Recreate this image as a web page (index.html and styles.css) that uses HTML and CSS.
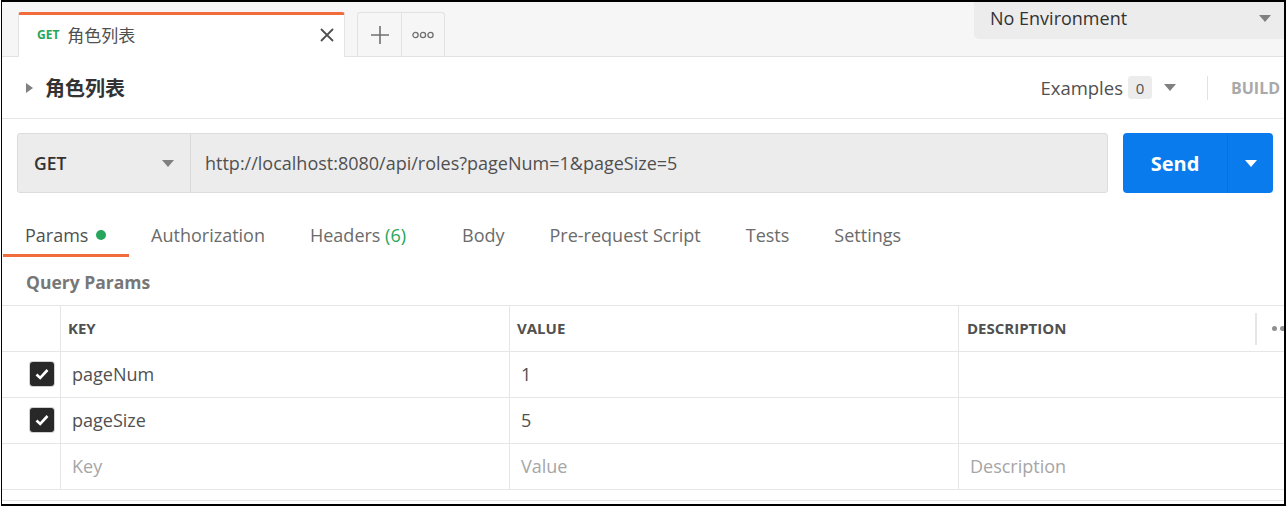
FILE: index.html
```html
<!DOCTYPE html>
<html lang="zh">
<head>
<meta charset="utf-8">
<title>角色列表</title>
<link rel="stylesheet" href="styles.css">
</head>
<body>
<div class="frame">
  <header class="tabbar">
    <div class="req-tab">
      <span class="tab-method">GET</span>
      <span class="tab-name">角色列表</span>
      <svg class="tab-close" width="16" height="16" viewBox="0 0 16 16"><path d="M2 2 L14 14 M14 2 L2 14" stroke="#505050" stroke-width="1.8" fill="none"/></svg>
    </div>
    <div class="tab-actions">
      <div class="tab-btn"><svg width="20" height="20" viewBox="0 0 20 20"><path d="M10 1 V19 M1 10 H19" stroke="#707070" stroke-width="1.6" fill="none"/></svg></div>
      <div class="tab-btn"><svg width="22" height="8" viewBox="0 0 22 8"><circle cx="3.5" cy="4" r="2.6" stroke="#707070" stroke-width="1.3" fill="none"/><circle cx="11" cy="4" r="2.6" stroke="#707070" stroke-width="1.3" fill="none"/><circle cx="18.5" cy="4" r="2.6" stroke="#707070" stroke-width="1.3" fill="none"/></svg></div>
    </div>
    <div class="env">
      <span>No Environment</span>
      <span class="caret"></span>
    </div>
  </header>

  <div class="titlebar">
    <div class="title">
      <span class="tri-right"></span>
      <h1>角色列表</h1>
    </div>
    <div class="title-tools">
      <span class="examples">Examples</span>
      <span class="badge">0</span>
      <span class="caret"></span>
      <span class="vdiv"></span>
      <span class="build">BUILD</span>
    </div>
  </div>

  <div class="urlrow">
    <div class="urlbox">
      <div class="method"><span>GET</span><span class="caret"></span></div>
      <div class="url">http://localhost:8080/api/roles?pageNum=1&amp;pageSize=5</div>
    </div>
    <div class="send">
      <span class="send-label">Send</span>
      <span class="send-drop"><span class="caret white"></span></span>
    </div>
  </div>

  <nav class="reqtabs">
    <div class="rtab active">Params <span class="dot"></span></div>
    <div class="rtab">Authorization</div>
    <div class="rtab">Headers <span class="count">(6)</span></div>
    <div class="rtab">Body</div>
    <div class="rtab">Pre-request Script</div>
    <div class="rtab">Tests</div>
    <div class="rtab">Settings</div>
  </nav>

  <div class="qp">Query Params</div>

  <div class="ptable">
    <div class="prow head">
      <div class="c-check"></div>
      <div class="c-key">KEY</div>
      <div class="c-val">VALUE</div>
      <div class="c-desc">DESCRIPTION<span class="hdiv"></span><span class="hdots"><i></i><i></i></span></div>
    </div>
    <div class="prow">
      <div class="c-check"><span class="cb"><svg width="16" height="14" viewBox="0 0 16 14"><path d="M2.5 7.5 L6.2 11 L13.5 3" stroke="#fff" stroke-width="2.6" fill="none"/></svg></span></div>
      <div class="c-key">pageNum</div>
      <div class="c-val">1</div>
      <div class="c-desc"></div>
    </div>
    <div class="prow">
      <div class="c-check"><span class="cb"><svg width="16" height="14" viewBox="0 0 16 14"><path d="M2.5 7.5 L6.2 11 L13.5 3" stroke="#fff" stroke-width="2.6" fill="none"/></svg></span></div>
      <div class="c-key">pageSize</div>
      <div class="c-val">5</div>
      <div class="c-desc"></div>
    </div>
    <div class="prow ph">
      <div class="c-check"></div>
      <div class="c-key">Key</div>
      <div class="c-val">Value</div>
      <div class="c-desc">Description</div>
    </div>
  </div>
  <div class="tail"></div>
</div>
</body>
</html>
```

FILE: styles.css
```css
* { box-sizing: border-box; }
html, body { margin: 0; padding: 0; background: #fff; }
body {
  font-family: "Open Sans", "Noto Sans CJK SC", sans-serif;
  color: #505050;
}
.frame {
  width: 1285px;
  height: 506px;
  margin-left: 1px;
  border-top: 2px solid #000;
  border-left: 1px solid #000;
  border-right: 2px solid #000;
  border-bottom: 2px solid #000;
  overflow: hidden;
  background: #fff;
}

/* top tab bar */
.tabbar {
  height: 55px;
  background: #f6f6f6;
  border-bottom: 1px solid #e2e2e2;
  display: flex;
  align-items: flex-end;
  padding-left: 16px;
  position: relative;
}
.req-tab {
  width: 327px;
  height: 45px;
  margin-bottom: -1px;
  background: #fff;
  border-top: 3px solid #f26b3a;
  border-left: 1px solid #e4e4e4;
  border-right: 1px solid #e4e4e4;
  border-radius: 3px 3px 0 0;
  display: flex;
  align-items: center;
  padding: 0 8px 3px 18px;
}
.tab-method {
  font-size: 12px;
  font-weight: 700;
  color: #26a65b;
  margin-right: 8px;
}
.tab-name {
  font-size: 17px;
  color: #505050;
  flex: 1;
}
.tab-close { margin-right: 1px; }
.tab-actions {
  margin-left: 12px;
  height: 44px;
  display: flex;
  border: 1px solid #e2e2e2;
  border-bottom: none;
  border-radius: 3px 3px 0 0;
}
.tab-btn {
  width: 43px;
  display: flex;
  align-items: center;
  justify-content: center;
}
.tab-btn + .tab-btn { border-left: 1px solid #e2e2e2; }
.env {
  position: absolute;
  top: 0;
  right: 0;
  width: 310px;
  height: 37px;
  background: #ececec;
  border-radius: 0 0 0 5px;
  display: flex;
  align-items: center;
  justify-content: space-between;
  padding: 0 13px 5px 16px;
  font-size: 18px;
  color: #333;
}
.caret {
  display: inline-block;
  width: 0; height: 0;
  border-left: 6px solid transparent;
  border-right: 6px solid transparent;
  border-top: 7px solid #808080;
}
.caret.white { border-top-color: #fff; }

/* title */
.titlebar {
  height: 62px;
  border-bottom: 1px solid #e6e6e6;
  display: flex;
  align-items: center;
  justify-content: space-between;
  padding-left: 24px;
}
.title { display: flex; align-items: center; }
.tri-right {
  width: 0; height: 0;
  border-top: 5px solid transparent;
  border-bottom: 5px solid transparent;
  border-left: 7px solid #808080;
  margin-right: 12px;
}
h1 {
  margin: 0;
  font-size: 20px;
  font-weight: 700;
  color: #333;
}
.title-tools { display: flex; align-items: center; }
.examples { font-size: 18.5px; color: #505050; }
.badge {
  margin-left: 5px;
  background: #ececec;
  border-radius: 3px;
  font-size: 15px;
  width: 24px;
  height: 23px;
  display: flex;
  align-items: center;
  justify-content: center;
  color: #505050;
}
.title-tools .caret { margin-left: 12px; }
.vdiv {
  width: 1px;
  height: 24px;
  background: #e2e2e2;
  margin: 0 23px 0 31px;
}
.build {
  font-size: 16px;
  font-weight: 700;
  color: #a9a9a9;
  width: 53px;
  white-space: nowrap;
  overflow: hidden;
}

/* url row */
.urlrow {
  display: flex;
  padding: 14px 11px 0 15px;
  height: 88px;
}
.urlbox {
  flex: 1;
  display: flex;
  background: #ececec;
  border: 1px solid #dcdcdc;
  border-radius: 3px;
  height: 60px;
}
.method {
  width: 173px;
  border-right: 1px solid #d9d9d9;
  display: flex;
  align-items: center;
  justify-content: space-between;
  padding: 0 16px 0 16px;
  font-size: 17.5px;
  font-weight: 600;
  color: #333;
}
.url {
  display: flex;
  align-items: center;
  padding-left: 14px;
  font-size: 18px;
  color: #505050;
}
.send {
  margin-left: 15px;
  width: 150px;
  height: 60px;
  background: #097bed;
  border-radius: 4px;
  display: flex;
  color: #fff;
}
.send-label {
  flex: 1;
  display: flex;
  align-items: center;
  justify-content: center;
  font-size: 20px;
  font-weight: 700;
}
.send-drop {
  width: 46px;
  border-left: 1px solid #0b6fd4;
  display: flex;
  align-items: center;
  justify-content: center;
}

/* request tabs */
.reqtabs {
  display: flex;
  height: 50px;
  padding-left: 1px;
}
.rtab {
  padding: 9px 23px 0 22px;
  font-size: 18px;
  color: #6b6b6b;
  display: flex;
  align-items: center;
  white-space: pre;
  border-bottom: 3px solid transparent;
}
.rtab.active { border-bottom-color: #f26b3a; color: #505050; }
.dot {
  display: inline-block;
  width: 10px; height: 10px;
  border-radius: 50%;
  background: #26a65b;
  margin-left: 3px;
}
.count { color: #26a65b; margin-right: 11px; }

.qp {
  height: 49px;
  display: flex;
  align-items: center;
  padding: 2px 0 0 24px;
  font-size: 17.5px;
  font-weight: 700;
  color: #777;
  border-bottom: 1px solid #e6e6e6;
}

/* params table */
.prow {
  display: grid;
  grid-template-columns: 59px 449px 449px 1fr;
  height: 46px;
  border-bottom: 1px solid #e6e6e6;
  font-size: 18px;
}
.prow > div {
  display: flex;
  align-items: center;
  border-right: 1px solid #e6e6e6;
  padding-left: 11px;
  padding-bottom: 1px;
}
.prow > .c-desc { border-right: none; position: relative; }
.prow > .c-check { justify-content: flex-end; padding-left: 0; padding-right: 6px; }
.prow.head > div {
  font-size: 15px;
  font-weight: 700;
  color: #505050;
  padding-left: 7px;
}
.prow.head > .c-desc { padding-left: 8px; }
.hdiv {
  position: absolute;
  left: 296px;
  top: 7px;
  width: 2px;
  height: 32px;
  background: #e6e6e6;
}
.hdots {
  position: absolute;
  left: 313px;
  top: 20px;
  display: flex;
  gap: 3px;
}
.hdots i {
  display: block;
  width: 5px; height: 5px;
  border-radius: 50%;
  background: #909090;
}
.cb {
  width: 24px; height: 24px;
  background: #282828;
  border-radius: 3px;
  display: flex;
  align-items: center;
  justify-content: center;
  box-shadow: 0 0 0 1px #d0d0d0;
}
.prow.ph > div { color: #a6a6a6; }
.tail { height: 11px; border-bottom: 1px solid #e6e6e6; }
```
